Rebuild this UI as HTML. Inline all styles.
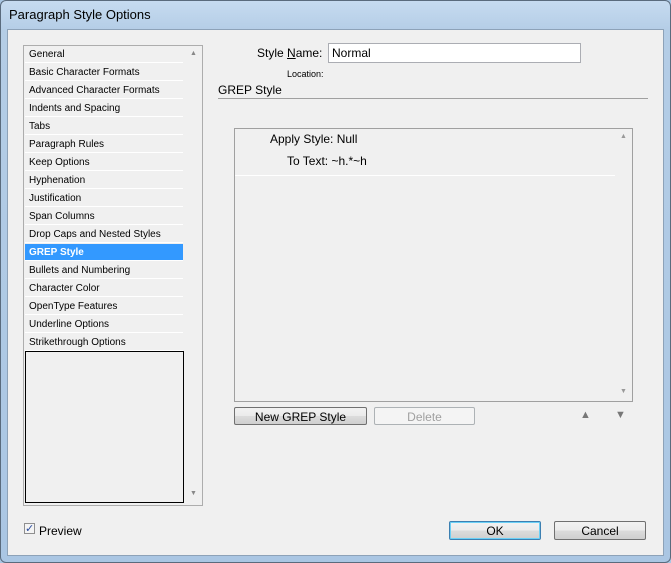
<!DOCTYPE html><html><head><style>
body{margin:0;width:671px;height:563px;background:#a9c6e3;font-family:"Liberation Sans",sans-serif;position:relative;overflow:hidden}
.a{position:absolute}
.win{left:0;top:0;width:669px;height:561px;border:1px solid #5a6b7d;border-radius:6px;background:linear-gradient(#c6dbf0,#b4cde6 30px,#aac6e3);}
.client{left:7px;top:29px;width:655px;height:525px;background:#f0f0f0;border:1px solid #8da2b8}
.t{font-size:11px;color:#000;white-space:nowrap}
.item{position:absolute;left:2px;height:17px;border-bottom:1px solid #fff;font-size:10px;line-height:18px;padding-left:4px;box-sizing:border-box;width:158px}
.btn{position:absolute;height:18px;border:1px solid #707070;border-radius:2px;background:linear-gradient(#f2f2f2,#ebebeb 50%,#dcdcdc 51%,#cfcfcf);font-size:12px;text-align:center;line-height:18px;box-sizing:border-box}
</style></head><body>
<div class="a win"></div>
<div class="a t" style="left:9px;top:7px;font-size:13px">Paragraph Style Options</div>
<div class="a client"></div>
<div class="a" style="left:23px;top:45px;width:178px;height:459px;border:1px solid #adadad;background:#f0f0f0"></div>
<div class="a" style="left:23px;top:45px;width:180px;">
<div class="item" style="top:1px">General</div>
<div class="item" style="top:19px">Basic Character Formats</div>
<div class="item" style="top:37px">Advanced Character Formats</div>
<div class="item" style="top:55px">Indents and Spacing</div>
<div class="item" style="top:73px">Tabs</div>
<div class="item" style="top:91px">Paragraph Rules</div>
<div class="item" style="top:109px">Keep Options</div>
<div class="item" style="top:127px">Hyphenation</div>
<div class="item" style="top:145px">Justification</div>
<div class="item" style="top:163px">Span Columns</div>
<div class="item" style="top:181px">Drop Caps and Nested Styles</div>
<div class="item" style="top:199px;background:#3399ff;color:#fff;font-weight:bold">GREP Style</div>
<div class="item" style="top:217px">Bullets and Numbering</div>
<div class="item" style="top:235px">Character Color</div>
<div class="item" style="top:253px">OpenType Features</div>
<div class="item" style="top:271px">Underline Options</div>
<div class="item" style="top:289px">Strikethrough Options</div>
</div>
<div class="a" style="left:25px;top:351px;width:157px;height:150px;border:1px solid #000"></div>
<div class="a" style="left:190px;top:50px;font-size:7px;color:#888">▲</div>
<div class="a" style="left:190px;top:490px;font-size:7px;color:#888">▼</div>
<div class="a t" style="left:257px;top:46px;font-size:12px">Style <u>N</u>ame:</div>
<div class="a" style="left:328px;top:43px;width:253px;height:20px;border:1px solid #abadb3;background:#fff;box-sizing:border-box"></div>
<div class="a t" style="left:332px;top:46px;font-size:12px">Normal</div>
<div class="a t" style="left:287px;top:69px;font-size:9px">Location:</div>
<div class="a t" style="left:218px;top:83px;font-size:12px">GREP Style</div>
<div class="a" style="left:218px;top:98px;width:430px;height:1px;background:#a0a0a0"></div>
<div class="a" style="left:234px;top:128px;width:397px;height:272px;border:1px solid #a0a0a0;background:#f0f0f0"></div>
<div class="a t" style="left:270px;top:132px;font-size:12px">Apply Style: Null</div>
<div class="a t" style="left:287px;top:154px;font-size:12px">To Text: ~h.*~h</div>
<div class="a" style="left:235px;top:175px;width:380px;height:1px;background:#fff"></div>
<div class="a" style="left:620px;top:133px;font-size:7px;color:#999">▲</div>
<div class="a" style="left:620px;top:388px;font-size:7px;color:#999">▼</div>
<div class="btn" style="left:234px;top:407px;width:133px">New GREP Style</div>
<div class="btn" style="left:374px;top:407px;width:101px;border-color:#adb2b5;background:#f4f4f4;color:#a0a0a0">Delete</div>
<div class="a" style="left:580px;top:409px;font-size:11px;color:#777">▲</div>
<div class="a" style="left:615px;top:409px;font-size:11px;color:#777">▼</div>
<div class="a" style="left:24px;top:523px;width:11px;height:11px;border:1px solid #8f8f8f;background:#f4f4f4;box-sizing:border-box;font-size:11px;line-height:10px;color:#2a4c9e;text-align:center">✓</div>
<div class="a t" style="left:39px;top:524px;font-size:12px">Preview</div>
<div class="btn" style="left:449px;top:521px;width:92px;height:19px;border-color:#3c7fb1;box-shadow:inset 0 0 0 1px #6bd0f6">OK</div>
<div class="btn" style="left:554px;top:521px;width:92px;height:19px">Cancel</div>
</body></html>
